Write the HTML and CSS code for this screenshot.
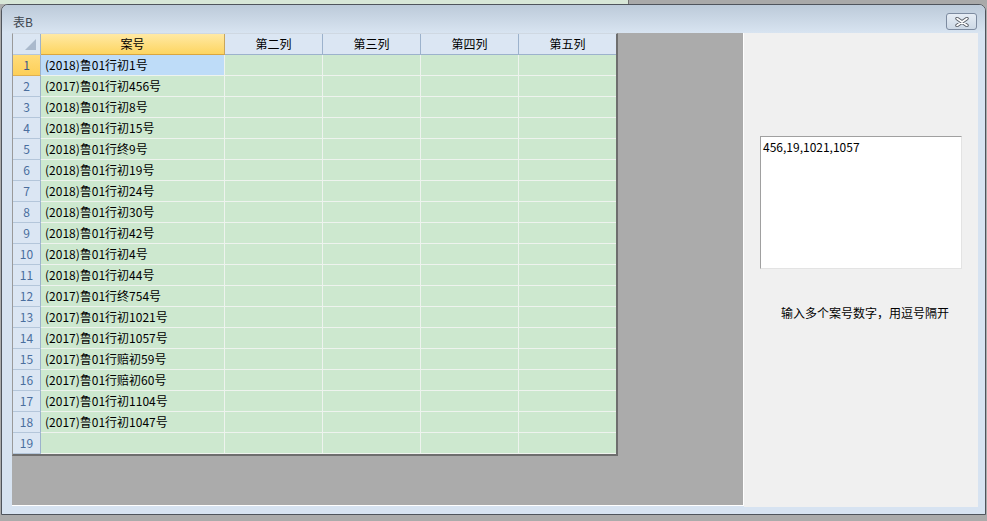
FILE: index.html
```html
<!DOCTYPE html>
<html lang="zh-CN">
<head>
    <meta charset="UTF-8">
    <title>表B</title>
    <link rel="stylesheet" href="styles.css">
</head>
<body>
    <!-- полоска рабочего стола над окном -->
    <div class="desk">
        <div class="desk-sheet"></div>
        <div class="desk-gray"></div>
    </div>

    <div class="window">
        <!-- заголовок окна -->
        <div class="title-bar">
            <span class="title">表B</span>
            <button class="close-btn">
                <svg width="14" height="10" viewBox="0 0 14 10">
                    <path d="M2 1.5 L12 8.5 M12 1.5 L2 8.5" stroke="#5a5f68" stroke-width="3.4" stroke-linecap="round"/>
                    <path d="M2 1.5 L12 8.5 M12 1.5 L2 8.5" stroke="#ffffff" stroke-width="1.6" stroke-linecap="round"/>
                </svg>
            </button>
        </div>

        <div class="client">
            <!-- таблица -->
            <div class="grid-area">
                <div class="sheet">
                    <div class="row head">
                        <div class="num corner"><span class="tri"></span></div>
                        <div class="hcell active">案号</div>
                        <div class="hcell">第二列</div>
                        <div class="hcell">第三列</div>
                        <div class="hcell">第四列</div>
                        <div class="hcell">第五列</div>
                    </div>
                    <div class="row"><div class="num active">1</div><div class="cell selected">(2018)鲁01行初1号</div><div class="cell"></div><div class="cell"></div><div class="cell"></div><div class="cell"></div></div>
                    <div class="row"><div class="num">2</div><div class="cell">(2017)鲁01行初456号</div><div class="cell"></div><div class="cell"></div><div class="cell"></div><div class="cell"></div></div>
                    <div class="row"><div class="num">3</div><div class="cell">(2018)鲁01行初8号</div><div class="cell"></div><div class="cell"></div><div class="cell"></div><div class="cell"></div></div>
                    <div class="row"><div class="num">4</div><div class="cell">(2018)鲁01行初15号</div><div class="cell"></div><div class="cell"></div><div class="cell"></div><div class="cell"></div></div>
                    <div class="row"><div class="num">5</div><div class="cell">(2018)鲁01行终9号</div><div class="cell"></div><div class="cell"></div><div class="cell"></div><div class="cell"></div></div>
                    <div class="row"><div class="num">6</div><div class="cell">(2018)鲁01行初19号</div><div class="cell"></div><div class="cell"></div><div class="cell"></div><div class="cell"></div></div>
                    <div class="row"><div class="num">7</div><div class="cell">(2018)鲁01行初24号</div><div class="cell"></div><div class="cell"></div><div class="cell"></div><div class="cell"></div></div>
                    <div class="row"><div class="num">8</div><div class="cell">(2018)鲁01行初30号</div><div class="cell"></div><div class="cell"></div><div class="cell"></div><div class="cell"></div></div>
                    <div class="row"><div class="num">9</div><div class="cell">(2018)鲁01行初42号</div><div class="cell"></div><div class="cell"></div><div class="cell"></div><div class="cell"></div></div>
                    <div class="row"><div class="num">10</div><div class="cell">(2018)鲁01行初4号</div><div class="cell"></div><div class="cell"></div><div class="cell"></div><div class="cell"></div></div>
                    <div class="row"><div class="num">11</div><div class="cell">(2018)鲁01行初44号</div><div class="cell"></div><div class="cell"></div><div class="cell"></div><div class="cell"></div></div>
                    <div class="row"><div class="num">12</div><div class="cell">(2017)鲁01行终754号</div><div class="cell"></div><div class="cell"></div><div class="cell"></div><div class="cell"></div></div>
                    <div class="row"><div class="num">13</div><div class="cell">(2017)鲁01行初1021号</div><div class="cell"></div><div class="cell"></div><div class="cell"></div><div class="cell"></div></div>
                    <div class="row"><div class="num">14</div><div class="cell">(2017)鲁01行初1057号</div><div class="cell"></div><div class="cell"></div><div class="cell"></div><div class="cell"></div></div>
                    <div class="row"><div class="num">15</div><div class="cell">(2017)鲁01行赔初59号</div><div class="cell"></div><div class="cell"></div><div class="cell"></div><div class="cell"></div></div>
                    <div class="row"><div class="num">16</div><div class="cell">(2017)鲁01行赔初60号</div><div class="cell"></div><div class="cell"></div><div class="cell"></div><div class="cell"></div></div>
                    <div class="row"><div class="num">17</div><div class="cell">(2017)鲁01行初1104号</div><div class="cell"></div><div class="cell"></div><div class="cell"></div><div class="cell"></div></div>
                    <div class="row"><div class="num">18</div><div class="cell">(2017)鲁01行初1047号</div><div class="cell"></div><div class="cell"></div><div class="cell"></div><div class="cell"></div></div>
                    <div class="row"><div class="num">19</div><div class="cell"></div><div class="cell"></div><div class="cell"></div><div class="cell"></div><div class="cell"></div></div>
                </div>
            </div>

            <!-- правая панель -->
            <div class="side">
                <textarea class="numbers" readonly>456,19,1021,1057</textarea>
                <div class="hint">输入多个案号数字，用逗号隔开</div>
            </div>
        </div>
    </div>
</body>
</html>
```

FILE: styles.css
```css
body {
    margin: 0;
    width: 987px;
    height: 521px;
    overflow: hidden;
    background: #ababab;
    font-family: "Noto Sans CJK SC", "Liberation Sans", sans-serif;
    font-size: 12px;
    color: #000;
}

/* полоска рабочего стола */
.desk {
    display: flex;
    height: 4px;
}

.desk-sheet {
    width: 628px;
    background: #d7e6d7;
    border-right: 1px solid #6f6f6f;
}

.desk-gray {
    flex: 1;
    background: #a9a9a9;
}

/* окно */
.window {
    margin-left: 1px;
    width: 985px;
    height: 511px;
    box-sizing: border-box;
    border: 1px solid #4f545c;
    border-radius: 7px 7px 0 0;
    background: #d7e3f1;
    display: flex;
    flex-direction: column;
}

.title-bar {
    height: 28px;
    display: flex;
    justify-content: space-between;
    align-items: flex-start;
    padding: 0 8px 0 11px;
    background: linear-gradient(to bottom, #bccad9, #d8e4f1);
    border-radius: 6px 6px 0 0;
}

.title {
    padding-top: 9px;
    line-height: 16px;
    color: #3e4650;
}

.close-btn {
    margin-top: 8px;
    width: 31px;
    height: 17px;
    padding: 0;
    border: 1px solid #7d8ba0;
    border-radius: 3px;
    background: linear-gradient(to bottom, #e6edf5, #cdd9e6);
    display: flex;
    align-items: center;
    justify-content: center;
}

.client {
    display: flex;
    height: 474px;
    margin: 0 7px 0 10px;
}

/* серая область с таблицей */
.grid-area {
    width: 732px;
    height: 473px;
    box-sizing: border-box;
    background: #ababab;
    border-right: 1px solid #ffffff;
    border-bottom: 1px solid #ffffff;
}

.sheet {
    width: 606px;
    box-sizing: border-box;
    border-top: 1px solid #cfd8e2;
    border-left: 1px solid #9a9a9a;
    border-right: 2px solid #6e6e6e;
    border-bottom: 2px solid #6e6e6e;
}

.row {
    display: grid;
    grid-template-columns: 28px 184px 98px 98px 98px 97px;
    height: 21px;
}

.row > div {
    box-sizing: border-box;
    height: 21px;
    line-height: 20px;
    white-space: nowrap;
    overflow: hidden;
}

.row > div:last-child {
    border-right: none;
}

.num {
    background: #dbe6f3;
    border-right: 1px solid #9cb2cc;
    border-bottom: 1px solid #b4c6da;
    color: #4a6e9e;
    text-align: center;
}

.num.active {
    background: linear-gradient(to bottom, #ffdc7a, #fdcf58);
    border-bottom-color: #e0b050;
    color: #3c5a88;
}

.corner {
    position: relative;
}

.corner .tri {
    position: absolute;
    right: 4px;
    bottom: 4px;
    border-style: solid;
    border-width: 0 0 11px 11px;
    border-color: transparent transparent #aab9cc transparent;
}

.hcell {
    background: #dbe6f3;
    border-right: 1px solid #9cb2cc;
    border-bottom: 1px solid #9cb2cc;
    text-align: center;
}

.hcell.active {
    background: linear-gradient(to bottom, #ffe9a4, #fdd561);
    border-bottom-color: #d9a640;
    border-right-color: #c9a65c;
}

.cell {
    background: #cde8cf;
    border-right: 1px solid #eef3ee;
    border-bottom: 1px solid #eef3ee;
    padding-left: 4px;
}

.cell.selected {
    background: #bedcf8;
}

/* правая панель */
.side {
    flex: 1;
    background: #f0f0f0;
    padding: 103px 0 0 16px;
}

.numbers {
    display: block;
    width: 202px;
    height: 133px;
    box-sizing: border-box;
    margin: 0;
    padding: 3px 2px;
    border: 1px solid;
    border-color: #a0a0a0 #e3e3e3 #e3e3e3 #a0a0a0;
    background: #ffffff;
    font-family: "Noto Sans CJK SC", "Liberation Sans", sans-serif;
    font-size: 12px;
    line-height: 14px;
    resize: none;
    outline: none;
}

.hint {
    margin-top: 36px;
    padding-left: 21px;
    line-height: 16px;
    white-space: nowrap;
}
```
